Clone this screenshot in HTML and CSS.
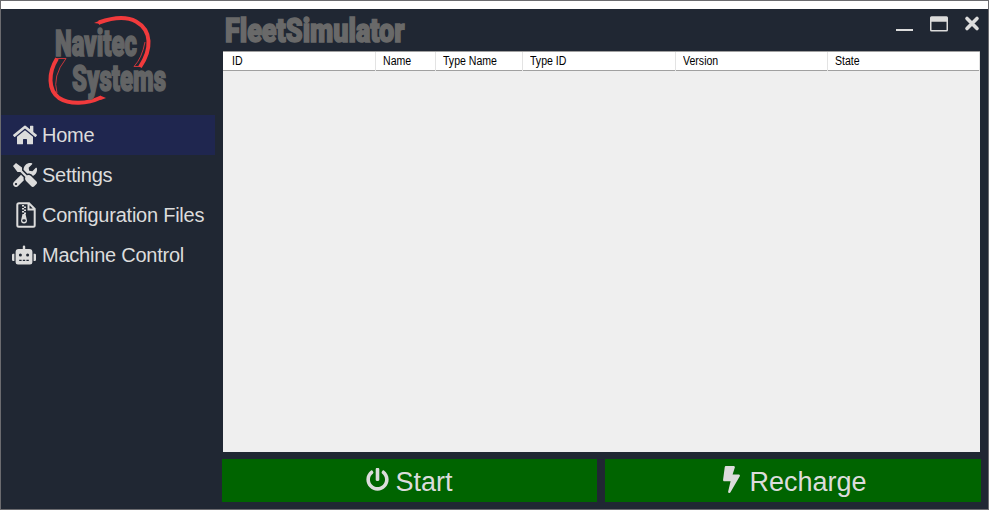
FILE: index.html
```html
<!DOCTYPE html>
<html lang="en">
<head>
<meta charset="utf-8">
<title>FleetSimulator</title>
<link rel="stylesheet" href="styles.css">
</head>
<body>
<div class="window">
  <div class="strip"></div>
  <div class="app">
    <aside class="sidebar">
      <svg class="logo" viewBox="0 0 214 106" role="img" aria-label="Navitec Systems">
        <path class="swoosh" d="M98 13.500C112 8.500 126 7.500 135 12.500C151 21.500 151 40 139 58"/>
        <path class="tip" d="M93 14L99 11.500V16L97 14.500Z"/>
        <path class="swoosh" d="M56 49.500C47 64 47 81 58 89C69 96 86 95 100 88.500"/>
        <path class="tip" d="M105 89L99 86.500L98 91L101 90.500Z"/>
        <path class="hair" d="M144 33Q141 49 133 57.500H140M54 49.500H65Q51 67 56 84"/>
        <text class="brand" x="54" y="46.500" textLength="82" lengthAdjust="spacingAndGlyphs">Navitec</text>
        <text class="brand" x="71" y="81.500" textLength="94" lengthAdjust="spacingAndGlyphs">Systems</text>
      </svg>
      <nav class="menu">
        <a class="item active"><svg class="icon" viewBox="0 0 576 512"><path d="M280.37 148.26L96 300.11V464a16 16 0 0 0 16 16l112.06-.29a16 16 0 0 0 15.92-16V368a16 16 0 0 1 16-16h64a16 16 0 0 1 16 16v95.64a16 16 0 0 0 16 16.05L464 480a16 16 0 0 0 16-16V300L295.67 148.26a12.19 12.19 0 0 0-15.3 0zM571.6 251.47L488 182.56V44.05a12 12 0 0 0-12-12h-56a12 12 0 0 0-12 12v72.61L318.47 43a48 48 0 0 0-61 0L4.34 251.47a12 12 0 0 0-1.6 16.9l25.5 31A12 12 0 0 0 45.15 301l235.22-193.74a12.19 12.19 0 0 1 15.3 0L530.9 301a12 12 0 0 0 16.9-1.6l25.5-31a12 12 0 0 0-1.7-16.93z"/></svg><span>Home</span></a>
        <a class="item"><svg class="icon" viewBox="0 0 512 512"><path d="M501.1 395.7L384 278.6c-23.1-23.1-57.6-27.6-85.4-13.9L192 158.1V96L64 0 0 64l96 128h62.1l106.6 106.6c-13.6 27.8-9.2 62.3 13.9 85.4l117.1 117.1c14.6 14.6 38.2 14.6 52.7 0l52.7-52.7c14.5-14.6 14.5-38.2 0-52.7zM331.7 225c28.3 0 54.9 11 74.9 31l19.4 19.4c15.8-6.9 30.8-16.5 43.8-29.5 37.1-37.1 49.7-89.3 37.9-136.7-2.2-9-13.5-12.1-20.1-5.5l-74.4 74.4-67.9-11.3L334 98.900l74.4-74.400c6.600-6.600 3.400-17.900-5.700-20.200-47.400-11.700-99.600.9-136.600 37.900-28.500 28.500-41.900 66.100-41.200 103.600l82.1 82.1c8.100-1.900 16.500-2.900 24.700-2.900zm-103.900 82l-56.700-56.700L18.700 402.800c-25 25-25 65.500 0 90.500s65.500 25 90.500 0l123.600-123.600c-7.600-19.900-9.900-41.600-5-62.700zM64 472c-13.200 0-24-10.800-24-24 0-13.300 10.700-24 24-24s24 10.700 24 24c0 13.200-10.700 24-24 24z"/></svg><span>Settings</span></a>
        <a class="item"><svg class="icon file" viewBox="0 0 20 26"><path class="outline" d="M3 1.300H13L18.700 7V23.200Q18.700 24.700 17.200 24.700H2.800Q1.300 24.700 1.300 23.200V2.800Q1.300 1.300 3 1.300ZM12.500 1.500V7.500H18.500"/><path d="M6 3h2v1.500H6zM8 4.500h2V6H8zM6 6h2v1.500H6zM8 7.500h2V9H8zM6 9h2v1.500H6zM8 10.500h2V12H8z"/><path fill-rule="evenodd" d="M6.500 12H9.500L11 18.500A3 3 0 1 1 5 18.500ZM8 17.200A1.700 1.300 0 1 0 8 20A1.700 1.300 0 1 0 8 17.200Z"/></svg><span>Configuration Files</span></a>
        <a class="item"><svg class="icon robot" viewBox="0 0 640 512"><path d="M32 224H64V416H32A32 32 0 0 1 0 384V256A32 32 0 0 1 32 224Zm512-48V448a64 64 0 0 1-64 64H160a64 64 0 0 1-64-64V176a80 80 0 0 1 80-80H288V32a32 32 0 0 1 64 0V96H464A80 80 0 0 1 544 176ZM264 256a40 40 0 1 0-40 40A40 40 0 0 0 264 256Zm-8 128H192v32h64Zm96 0H288v32h64ZM456 256a40 40 0 1 0-40 40A40 40 0 0 0 456 256Zm-8 128H384v32h64ZM640 256V384a32 32 0 0 1-32 32H576V224h32A32 32 0 0 1 640 256Z"/></svg><span>Machine Control</span></a>
      </nav>
    </aside>
    <main class="main">
      <header class="titlebar">
        <svg class="title" viewBox="0 0 190 42" role="img" aria-label="FleetSimulator"><text class="brand" x="3" y="32.500" textLength="179.500" lengthAdjust="spacingAndGlyphs">FleetSimulator</text></svg>
        <svg class="controls" viewBox="0 0 88 30"><path d="M0 21H17" stroke-width="2"/><path fill-rule="evenodd" fill="#dcdcdc" stroke="none" d="M35.500 7.200H50.500Q52 7.200 52 8.700V21Q52 22.500 50.500 22.500H35.500Q34 22.500 34 21V8.700Q34 7.200 35.500 7.200ZM35.500 12.700V21H50.500V12.700Z"/><path d="M71 9.500L81 19.500M81 9.500L71 19.500" stroke-width="3.600" stroke-linecap="round"/></svg>
      </header>
      <section class="table">
        <div class="head">
          <div class="cell"><span>ID</span></div><div class="cell"><span>Name</span></div><div class="cell"><span>Type Name</span></div><div class="cell"><span>Type ID</span></div><div class="cell"><span>Version</span></div><div class="cell"><span>State</span></div>
        </div>
      </section>
      <footer class="actions">
        <button class="btn start"><svg class="power" viewBox="0 0 512 512"><path d="M400 54.1c63 45 104 118.600 104 201.900 0 136.800-110.800 247.700-247.500 248C120 504.300 8.200 393 8 256.400 7.900 173.100 48.900 99.300 111.800 54.200c11.700-8.300 28-4.800 35 7.700L162.600 90c5.900 10.500 3.100 23.800-6.600 31-41.500 30.800-68 79.600-68 134.900-.1 92.300 74.500 168.100 168 168.100 91.600 0 168.600-74.200 168-169.100-.3-51.800-24.700-101.800-68.100-134-9.700-7.200-12.400-20.500-6.500-30.900l15.800-28.100c7-12.400 23.200-16.100 34.800-7.800zM296 264V24c0-13.300-10.700-24-24-24h-32c-13.300 0-24 10.700-24 24v240c0 13.300 10.700 24 24 24h32c13.300 0 24-10.700 24-24z"/></svg><span>Start</span></button>
        <button class="btn recharge"><svg class="bolt" viewBox="0 0 320 512"><path d="M296 160H180.600l42.600-129.800C227.200 15 215.700 0 200 0H56C44 0 33.800 8.900 32.200 20.800l-32 240C-1.700 275.200 9.500 288 24 288h118.700L96.600 482.500c-3.600 15.200 8 29.500 23.300 29.500 8.400 0 16.400-4.400 20.800-12l176-304c9.300-15.900-2.200-36-20.700-36z"/></svg><span>Recharge</span></button>
      </footer>
    </main>
  </div>
</div>
</body>
</html>
```
FILE: styles.css
```css
* { box-sizing: border-box; }
body { margin: 0; font-family: "Liberation Sans", Arial, sans-serif; color: #dcdcdc; }
.window { width: 989px; height: 510px; border: 1px solid #6b6b6f; background: #202733; display: flex; flex-direction: column; }
.strip { height: 8px; background: #fff; }
.app { flex: 1; display: flex; }
.sidebar { width: 214px; }
.logo { display: block; width: 214px; height: 106px; }
.swoosh { fill: none; stroke: #f13a3c; stroke-width: 4; }
.tip { fill: #f13a3c; }
.hair { fill: none; stroke: #f13a3c; stroke-width: .8; }
.brand { font-family: Roboto, sans-serif; font-weight: 900; font-size: 36px; fill: #636465; stroke: #636465; stroke-width: 1.6; }
.menu { display: flex; flex-direction: column; }
.item { height: 40px; display: flex; align-items: center; gap: 5px; padding-left: 12px; font-size: 20px; letter-spacing: -.24px; white-space: nowrap; }
.item.active { background: #1f264f; }
.icon { width: 24px; height: 24px; flex: none; fill: #dcdcdc; }
.item .file { width: 26px; height: 26px; margin-right: -2px; }
.item .robot { margin: 0 1px 0 -1px; }
.outline { fill: none; stroke: #dcdcdc; stroke-width: 2; }
.main { width: 760px; margin-left: 6px; display: flex; flex-direction: column; }
.titlebar { height: 42px; display: flex; justify-content: space-between; }
.title { width: 190px; height: 42px; margin-left: 1px; }
.title .brand { font-size: 33px; fill: #696969; stroke: #696969; }
.controls { width: 88px; height: 30px; margin-right: -3px; stroke: #dcdcdc; fill: none; }
.table { width: 757px; height: 401px; margin-left: 2px; background: #efefef; }
.head { height: 20px; display: grid; grid-template-columns: 153px 60px 87px 153px 152px 1fr; background: #fff; border-top: 1px solid #a0a0a0; border-bottom: 1px solid #a0a0a0; }
.cell { padding-left: 7px; border-right: 1px solid #e3e3e3; font-size: 12px; line-height: 19px; color: #000; }
.cell:first-child { padding-left: 9px; }
.cell span { display: inline-block; transform: scaleX(.88); transform-origin: left; white-space: nowrap; }
.actions { display: grid; grid-template-columns: 375px 376px; gap: 8px; margin: 7px 0 0 1px; height: 43px; }
.btn { display: flex; align-items: center; justify-content: center; border: 0; padding: 3px 0 0; background: #006400; color: #dcdcdc; font: 27px "Liberation Sans", Arial, sans-serif; }
.btn svg { fill: #dcdcdc; }
.power { width: 23px; height: 23px; margin: -5px 6px 0 0; }
.bolt { width: 17px; height: 27px; margin: -5px 9px 0 0; }
.recharge { padding-left: 4px; }
```
